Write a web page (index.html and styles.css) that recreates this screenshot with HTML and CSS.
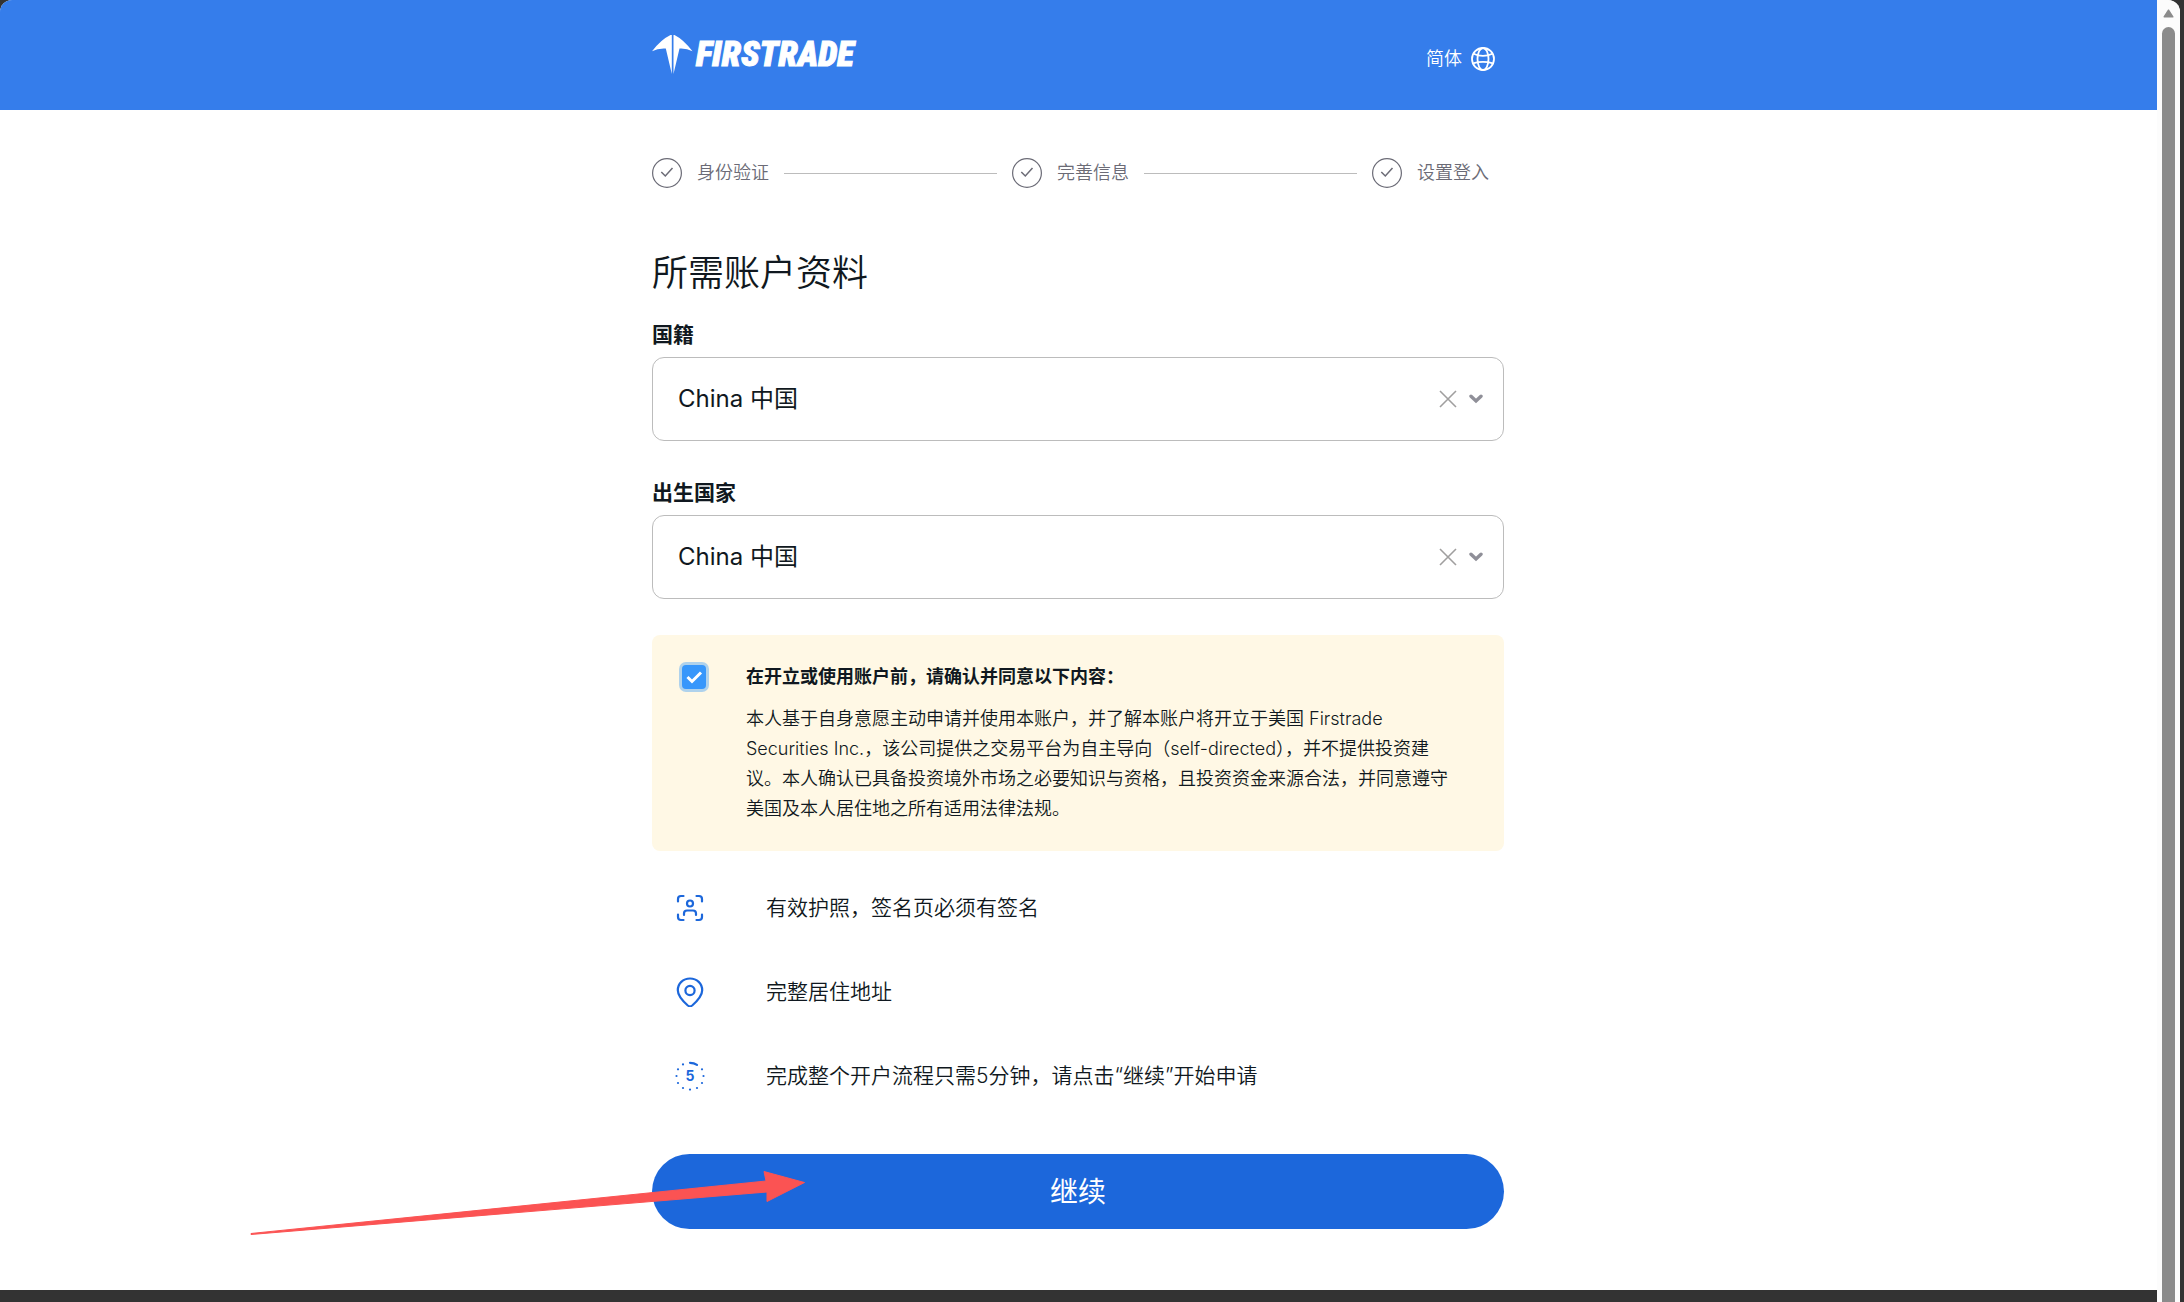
FILE: index.html
```html
<!DOCTYPE html>
<html lang="zh-CN">
<head>
<meta charset="utf-8">
<meta name="viewport" content="width=device-width, initial-scale=1">
<title>Firstrade</title>
<link rel="stylesheet" href="styles.css">
</head>
<body>
<svg class="sprite" aria-hidden="true">
  <symbol id="check" viewBox="0 0 30 30"><circle cx="15" cy="15" r="14.4" fill="none" stroke="#6b6b76" stroke-width="1.2"/><path d="M9.3 14l4 4 7.200-8" fill="none" stroke="#6b6b76" stroke-width="1.500"/></symbol>
  <symbol id="cross" viewBox="0 0 18 18"><path d="M1 1l16 16M17 1L1 17" fill="none" stroke="#a09f9f" stroke-width="1.600"/></symbol>
  <symbol id="chevron" viewBox="0 0 14 10"><path d="M2 2.200l5 4.800 5-4.800" fill="none" stroke="#8f8f98" stroke-width="3.400" stroke-linecap="round"/></symbol>
</svg>
<div class="window">
  <div class="page">
    <header class="topbar">
      <div class="container topbar-inner">
        <a class="logo" href="#">
          <svg class="logo-mark" viewBox="0 0 41 40" aria-hidden="true"><path fill="#fff" d="M19.800 0V39L13.800 13.500Q6 13 0 16.300 9 4.500 18.500 0zM21.500 0V39L27.500 13.500Q34.500 13 40.500 16.300 31.500 4.500 22.500 0z"/></svg>
          <span class="logo-text">FIRSTRADE</span>
        </a>
        <button class="language" type="button">简体
          <svg class="globe" viewBox="0 0 24 24" fill="none" stroke="#fff" stroke-width="1.800" aria-hidden="true"><circle cx="12" cy="12" r="11"/><ellipse cx="12" cy="12" rx="5.500" ry="11"/><path d="M2.500 6.800Q12 11 21.500 6.800M2 16.300Q12 13.500 22 16.300"/></svg>
        </button>
      </div>
    </header>
    <main class="container content">
      <ol class="steps">
        <li class="step"><svg class="step-icon"><use href="#check"/></svg><span>身份验证</span></li>
        <li class="step"><svg class="step-icon"><use href="#check"/></svg><span>完善信息</span></li>
        <li class="step"><svg class="step-icon"><use href="#check"/></svg><span>设置登入</span></li>
      </ol>
      <h1 class="title">所需账户资料</h1>
      <form>
        <label class="label" for="nationality">国籍</label>
        <div class="field">
          <select class="select" id="nationality"><option>China 中国</option></select>
          <button class="clear" type="button" aria-label="清除"><svg class="cross"><use href="#cross"/></svg></button>
          <svg class="chevron"><use href="#chevron"/></svg>
        </div>
        <label class="label" for="birth">出生国家</label>
        <div class="field">
          <select class="select" id="birth"><option>China 中国</option></select>
          <button class="clear" type="button" aria-label="清除"><svg class="cross"><use href="#cross"/></svg></button>
          <svg class="chevron"><use href="#chevron"/></svg>
        </div>
        <div class="notice">
          <input class="tick" id="agree" type="checkbox" checked>
          <label class="notice-text" for="agree">
            <strong class="notice-title">在开立或使用账户前，请确认并同意以下内容：</strong>
            <span class="notice-body">本人基于自身意愿主动申请并使用本账户，并了解本账户将开立于美国 Firstrade Securities Inc.，该公司提供之交易平台为自主导向（self-directed），并不提供投资建议。本人确认已具备投资境外市场之必要知识与资格，且投资资金来源合法，并同意遵守美国及本人居住地之所有适用法律法规。</span>
          </label>
        </div>
        <ul class="needs">
          <li class="need">
            <svg class="need-icon" viewBox="0 0 30 30" fill="none" stroke="#1c67db" stroke-width="2.200" stroke-linecap="round" aria-hidden="true"><path d="M3 8.500V6Q3 3 6 3h2.500M21.500 3H24q3 0 3 3v2.500M27 21.500V24q0 3-3 3h-2.500M8.500 27H6q-3 0-3-3v-2.500M9 22v-1.500q0-3 3-3h6q3 0 3 3V22"/><circle cx="15" cy="10.500" r="3"/></svg>
            <span>有效护照，签名页必须有签名</span>
          </li>
          <li class="need">
            <svg class="need-icon" viewBox="0 0 30 30" fill="none" stroke="#1c67db" stroke-width="2.200" aria-hidden="true"><path d="M15 1.500C8 1.500 2.800 6.500 2.800 13.200c0 5 3 9 10 15.300q2.200 1.700 4.400 0c7-6.300 10-10.300 10-15.300C27.200 6.500 22 1.500 15 1.500z"/><circle cx="15" cy="13.500" r="4.600"/></svg>
            <span>完整居住地址</span>
          </li>
          <li class="need">
            <svg class="need-icon" viewBox="0 0 30 30" aria-hidden="true"><path d="M15 1.800q4 0 7 2" fill="none" stroke="#1c67db" stroke-width="2.200" stroke-linecap="round"/><g fill="#1c67db"><circle cx="8" cy="3.400" r="1.100"/><circle cx="3" cy="8.300" r="1.100"/><circle cx="1.500" cy="15" r="1.100"/><circle cx="3" cy="22" r="1.100"/><circle cx="8" cy="27" r="1.100"/><circle cx="15" cy="28.600" r="1.100"/><circle cx="22" cy="27" r="1.100"/><circle cx="27" cy="22" r="1.100"/><circle cx="28.500" cy="15" r="1.100"/><circle cx="27" cy="8.300" r="1.100"/></g><text class="need-digit" x="15" y="20" text-anchor="middle">5</text></svg>
            <span>完成整个开户流程只需5分钟，请点击“继续”开始申请</span>
          </li>
        </ul>
        <div class="action">
          <button class="continue" type="submit">继续</button>
          <svg class="pointer" viewBox="0 0 556 66" aria-hidden="true"><path fill="#fb5353" stroke="#fb5353" stroke-linejoin="round" d="M1 63.500L516 11 514 1.500 554.500 12.500 517 31.500V22L1 64.500z"/></svg>
        </div>
      </form>
    </main>
    <footer class="footer"></footer>
  </div>
  <div class="scrollbar" aria-hidden="true"><svg class="scroll-arrow" viewBox="0 0 11 9"><path d="M5.500 1.200L9.800 7.800H1.200z" fill="#8b8b8b" stroke="#8b8b8b" stroke-width="1.500" stroke-linejoin="round"/></svg><div class="thumb"></div></div>
</div>
</body>
</html>
```
FILE: styles.css
```css
* { box-sizing: border-box; }
body {
  margin: 0;
  background: #333;
  color: #101820;
  font-family: Inter, "Noto Sans CJK SC", sans-serif;
  font-size: 18px;
  font-weight: 350;
  line-height: 30px;
}
button, select { font: inherit; color: inherit; }
button { border: 0; background: none; padding: 0; cursor: pointer; }
svg { display: block; flex: none; }
ol, ul { list-style: none; margin: 0; padding: 0; }
.sprite { position: absolute; width: 0; height: 0; }

.window {
  display: flex;
  min-height: 100vh;
  margin-right: 4px;
  border-radius: 12px 12px 0 0;
  overflow: hidden;
  background: #fff;
}
.page { flex: 1; display: flex; flex-direction: column; }
.container { width: 100%; max-width: 853px; margin: 0 auto; padding-right: 1px; }

.topbar { background: #357deb; }
.topbar-inner { display: flex; justify-content: space-between; align-items: center; height: 110px; }
.logo { display: flex; align-items: center; gap: 3px; color: #fff; text-decoration: none; }
.logo-mark { width: 41px; height: 40px; }
.logo-text {
  font-family: Impact, "Roboto Condensed", "Open Sans Condensed", sans-serif;
  font-size: 35px;
  font-weight: 900;
  font-style: italic;
  line-height: 40px;
  -webkit-text-stroke: 1px #fff;
}
.language { display: flex; align-items: center; gap: 9px; padding: 8px 9px 0 0; color: #fff; }
.globe { width: 24px; height: 24px; }

.steps { display: flex; padding-top: 48px; color: #6b6b76; }
.step { display: flex; align-items: center; gap: 15px; padding-right: 15px; }
.step:not(:last-child) { flex: 1; }
.step:not(:last-child)::after { content: ""; flex: 1; height: 1px; background: #bcbcbc; }
.step-icon { width: 30px; height: 30px; }

.title { margin: 61px 0 0; font-size: 36px; font-weight: 350; line-height: 48px; }
.label { display: block; margin-top: 23px; font-size: 21px; font-weight: 700; line-height: 30px; }
.field {
  display: flex;
  align-items: center;
  height: 84px;
  margin-top: 7px;
  padding: 0 20px 0 25px;
  border: 1px solid #bcbcbc;
  border-radius: 12px;
}
.field + .label { margin-top: 37px; }
.select { flex: 1; appearance: none; border: 0; padding: 0; background: none; font-size: 24px; font-weight: 400; line-height: 36px; }
.clear { margin-right: 12px; }
.cross { width: 18px; height: 18px; }
.chevron { width: 14px; height: 10px; }

.notice { display: flex; align-items: flex-start; margin-top: 36px; padding: 27px 40px 27px 30px; border-radius: 8px; background: #fff8e5; }
.tick {
  appearance: none;
  flex: none;
  width: 24px;
  height: 24px;
  margin: 3px 40px 0 0;
  border-radius: 4px;
  background: #3797fb url("data:image/svg+xml,%3Csvg xmlns='http://www.w3.org/2000/svg' viewBox='0 0 24 24'%3E%3Cpath d='M5.500 12l4.500 4.500 9-9' fill='none' stroke='white' stroke-width='3'/%3E%3C/svg%3E");
  box-shadow: 0 0 0 3px #afd2ec;
}
.notice-title { display: block; margin-bottom: 12px; font-weight: 700; }
.notice-body { display: block; }

.needs { margin-top: 15px; }
.need { display: flex; align-items: center; gap: 61px; min-height: 84px; padding-left: 23px; font-size: 21px; }
.need-icon { width: 30px; height: 30px; }
.need-digit { font: 700 14px Inter, sans-serif; fill: #1c67db; }

.action { position: relative; margin-top: 36px; }
.continue { display: block; width: 100%; height: 75px; border-radius: 38px; background: #1c67db; color: #fff; font-size: 28px; font-weight: 400; }
.pointer { position: absolute; left: -402px; top: 16px; width: 556px; height: 66px; pointer-events: none; }

.footer { flex: 1; min-height: 12px; margin-top: 61px; background: #333; }

.scrollbar { width: 23px; display: flex; flex-direction: column; align-items: center; gap: 9px; padding-top: 9px; background: #fcfcfc; }
.scroll-arrow { width: 11px; height: 9px; }
.thumb { flex: 1; width: 13px; border-radius: 7px 7px 0 0; background: #8b8b8b; }
```
